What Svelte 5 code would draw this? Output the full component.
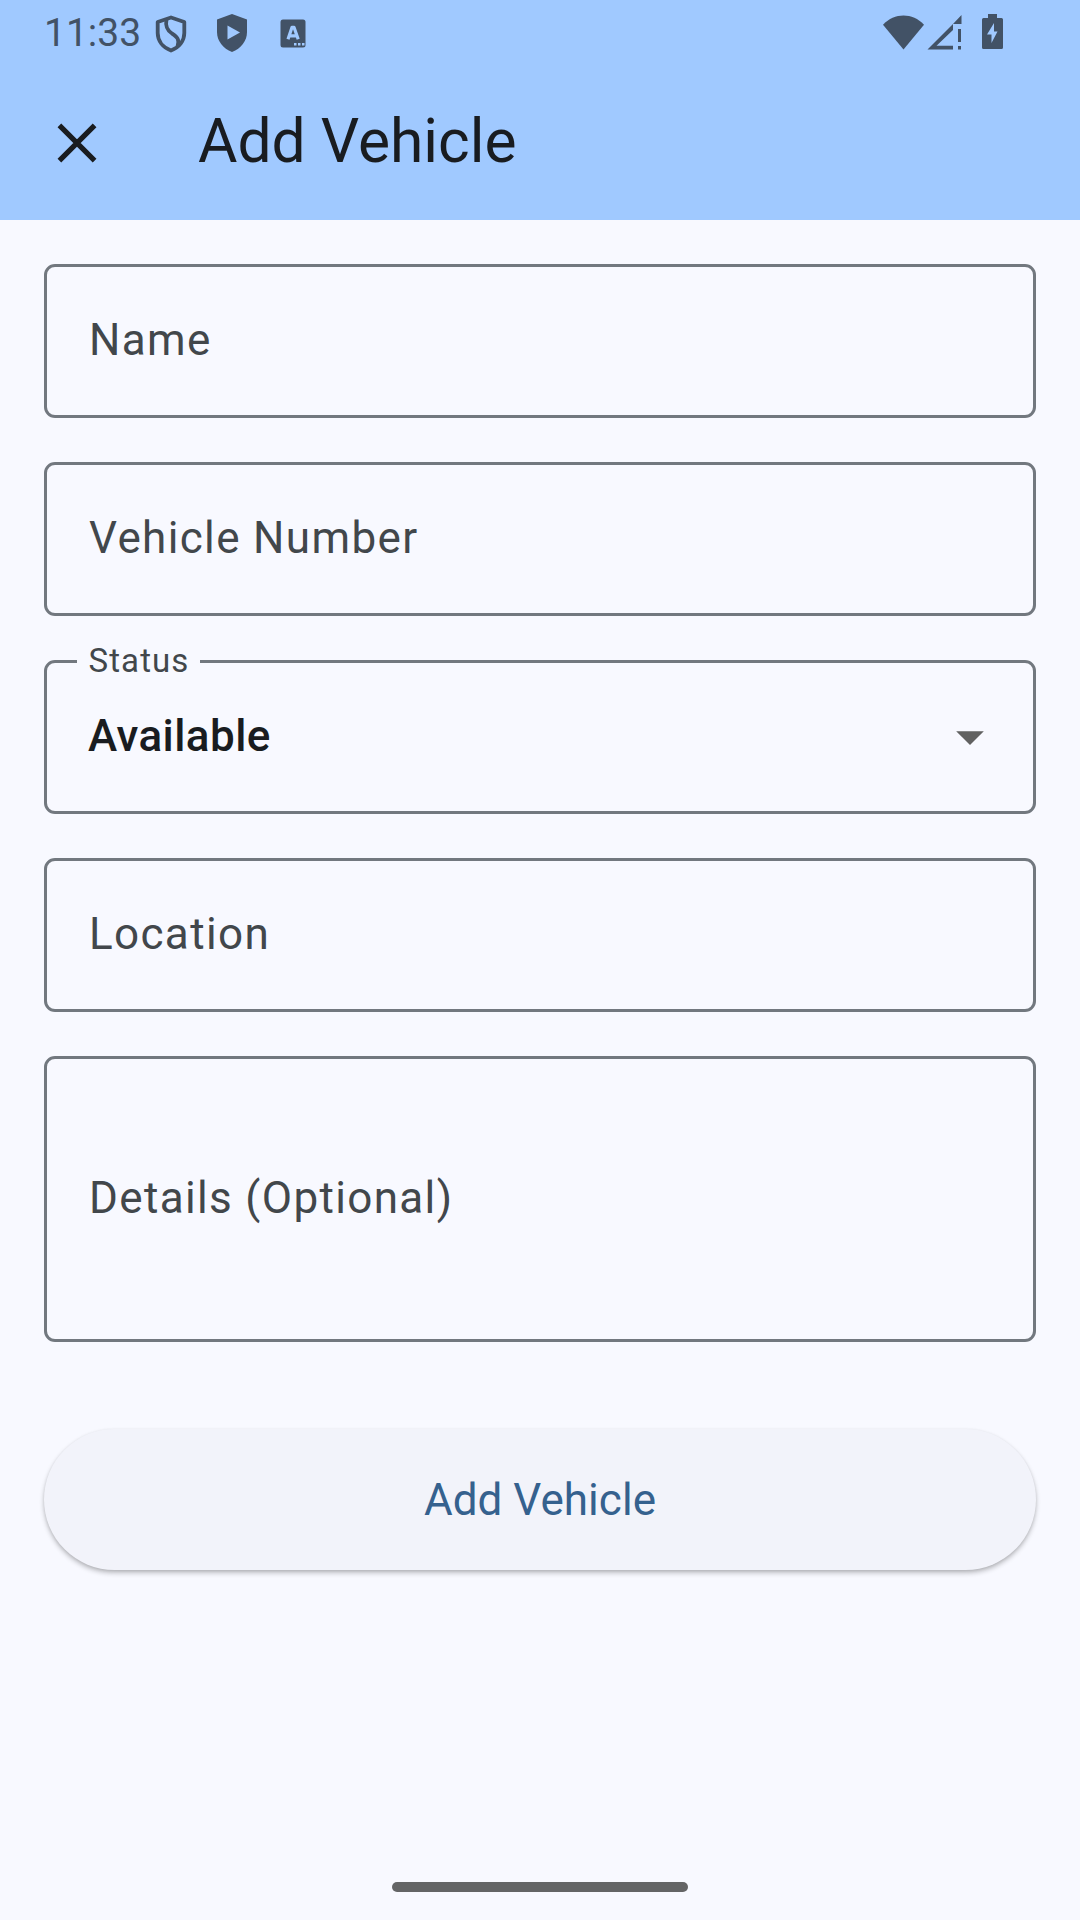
<script>
  let name = 'Name';
  let number = 'Vehicle Number';
</script>

<div class="screen">
  <header>
    <div class="statusbar">
      <span class="time">11:33</span>
      <svg class="shield" width="32" height="38" viewBox="0 0 32 38">
        <path d="M16 2.500L29.300 7V18C29.300 26 24 32.500 16 35.500C8 32.500 2.700 26 2.700 18V7Z" fill="none" stroke="#425266" stroke-width="3.800" stroke-linejoin="round" />
        <path d="M11.500 4C10 12 12.500 15.500 17 18.500C22 22 25 24 22.500 31.500" fill="none" stroke="#425266" stroke-width="3.800" />
      </svg>
      <svg class="play" width="32" height="38" viewBox="0 0 32 38">
        <path d="M16 0L31 5.500V18C31 27 25 34.500 16 38C7 34.500 1 27 1 18V5.500Z" fill="#425266" />
        <path d="M11.500 11.500V25.500L24 18.500Z" fill="#a0c9ff" />
      </svg>
      <svg class="badge" width="26" height="29" viewBox="0 0 26 29">
        <rect x="0.500" y="0.500" width="25" height="28" rx="2.500" fill="#425266" />
        <path d="M8 20.300L12 8.300H14L18.200 20.300M9.500 16.800H16.500" fill="none" stroke="#a0c9ff" stroke-width="3.200" stroke-linejoin="round" />
        <path d="M14 24h2.500v2.500h-2.500zM18 24h2.500v2.500h-2.500zM22 24h2.500v2.500h-2.500z" fill="#a0c9ff" />
      </svg>
      <svg class="wifi" width="42" height="35" viewBox="0 0 42 35">
        <path d="M0 9.800C11.500 -2.500 29.500 -2.500 41 9.800L20.500 34.500Z" fill="#425266" />
      </svg>
      <svg class="signal" width="35" height="35" viewBox="0 0 35 35">
        <path d="M34.500 0V9H26ZM26 9V15L9.500 30.800H26V34.500H0.500Z" fill="#425266" />
        <path d="M31 14h3v13h-3zM31 31h3v3.500h-3z" fill="#425266" />
      </svg>
      <svg class="battery" width="22" height="36" viewBox="0 0 22 36">
        <path d="M6 0H15V4H19.500Q21 4 21 5.500V33.500Q21 35 19.500 35H1.500Q0 35 0 33.500V5.500Q0 4 1.500 4H6Z" fill="#425266" />
        <path d="M12 9V17.500H15.500L9.500 29V20.500H5Z" fill="#a0c9ff" />
      </svg>
    </div>
    <div class="appbar">
      <svg class="close" width="40" height="40" viewBox="0 0 40 40">
        <path d="M2.400 2.400L37.600 37.600M37.600 2.400L2.400 37.600" stroke="#191c20" stroke-width="5.200" />
      </svg>
      <h1>Add Vehicle</h1>
    </div>
  </header>

  <main>
    <div class="field">{name}</div>
    <div class="field">{number}</div>
    <div class="field">
      <span class="legend">Status</span>
      <span class="value">Available</span>
      <svg class="caret" width="28" height="14" viewBox="0 0 28 14">
        <path d="M0.200 0.300H27.800L14 14Z" fill="#616161" />
      </svg>
    </div>
    <div class="field">Location</div>
    <div class="field tall">Details (Optional)</div>
    <button>Add Vehicle</button>
  </main>

  <div class="handle"></div>
</div>

<style>
  :global(body) { margin: 0; }
  .screen {
    width: 1080px;
    height: 1920px;
    display: flex;
    flex-direction: column;
    align-items: center;
    background: #f8f9ff;
    font-family: Roboto, sans-serif;
    box-sizing: border-box;
    overflow: hidden;
  }
  svg { display: block; flex: none; }
  header { width: 100%; height: 220px; background: #a0c9ff; flex: none; }
  .statusbar {
    height: 66px;
    box-sizing: border-box;
    display: flex;
    align-items: flex-start;
    padding: 14px 76px 0 44px;
    color: #425266;
  }
  .time { width: 111px; font-size: 39px; line-height: 38px; white-space: nowrap; }
  .shield { margin-top: 0.500px; }
  .play { margin-left: 29px; }
  .badge { margin: 5px 0 0 32px; }
  .wifi { margin: 1px 0 0 auto; }
  .signal { margin: 1px 0 0 2px; }
  .battery { margin-left: 20px; }
  .appbar {
    height: 154px;
    box-sizing: border-box;
    display: flex;
    align-items: center;
    padding-left: 57px;
    color: #191c20;
  }
  h1 { margin: 0 0 2px 101px; font-size: 60.5px; line-height: 76px; font-weight: 400; }
  main {
    width: 992px;
    padding-top: 44px;
    display: flex;
    flex-direction: column;
    gap: 44px;
    flex: 1;
  }
  .field {
    position: relative;
    display: flex;
    align-items: center;
    height: 154px;
    box-sizing: border-box;
    padding: 0 49px 2px 42px;
    border: 3px solid #72787f;
    border-radius: 11px;
    color: #42474b;
    font-size: 44px;
    line-height: 66px;
    letter-spacing: 1.350px;
  }
  .tall { height: 286px; }
  .legend {
    position: absolute;
    top: -22px;
    left: 30px;
    width: 123px;
    box-sizing: border-box;
    padding-left: 11.500px;
    background: #f8f9ff;
    font-size: 33px;
    line-height: 40px;
    letter-spacing: 1.100px;
  }
  .value { margin-left: -1px; color: #191c20; font-weight: 500; letter-spacing: 0.420px; }
  .caret { margin: 4px 0 0 auto; }
  button {
    height: 141px;
    margin-top: 43px;
    padding: 0;
    border: 0;
    border-radius: 71px;
    background: #f2f3fa;
    box-shadow: 0 3px 5px rgba(0, 0, 0, 0.240), 0 1px 3px rgba(0, 0, 0, 0.080);
    color: #35618e;
    font: 400 44px/56px Roboto, sans-serif;
    letter-spacing: 0.050px;
  }
  .handle { width: 296px; height: 10px; margin-bottom: 28px; border-radius: 5px; background: #646566; flex: none; }
</style>
